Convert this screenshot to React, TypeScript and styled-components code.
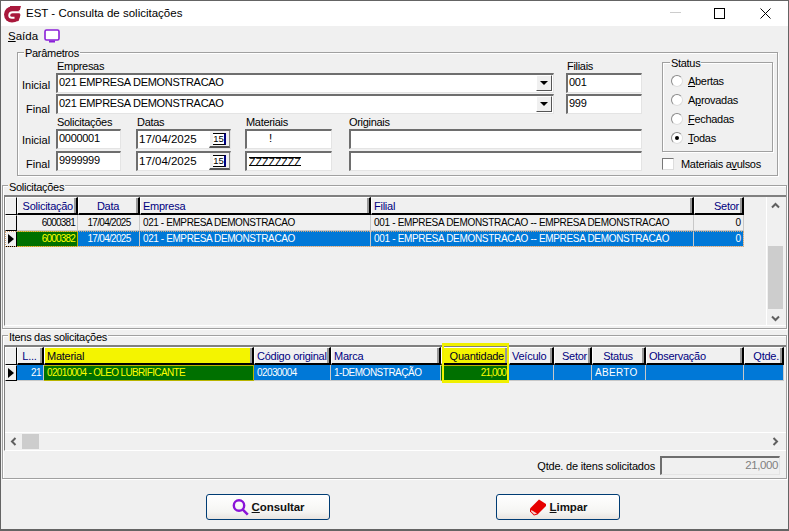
import React from 'react';
import styled, { createGlobalStyle, css } from 'styled-components';

const Global = createGlobalStyle`
  html, body { margin: 0; padding: 0; background: #f0f0f0; }
  body { font-family: "Liberation Sans", Arial, sans-serif; font-size: 11px; color: #000; }
  * { box-sizing: border-box; }
`;

const Win = styled.div`
  width: 789px; height: 531px; border: 1px solid #646464; border-bottom-width: 2px;
  background: #f0f0f0; display: flex; flex-direction: column; overflow: hidden;
`;
const TitleBar = styled.div`
  height: 25px; background: #fff; display: flex; align-items: center; padding-left: 3px; flex: none;
`;
const TitleText = styled.span`font-size: 11.5px; line-height: 14px; margin: 0 0 1px 5px; flex: 1; color: #000;`;
const WinBtn = styled.div<{ $pr?: number }>`
  width: 45px; height: 25px; display: flex; align-items: center; justify-content: center;
  padding: 0 ${p => p.$pr ?? 0}px 1px 0;
`;
const MenuBar = styled.div`
  height: 26px; flex: none; display: flex; align-items: flex-start; padding: 3px 7px 0; gap: 6px; font-size: 11.5px; line-height: 14px;
`;
const U = styled.span`text-decoration: underline;`;

const ParamBox = styled.div`
  position: relative; margin: 0 10px 0 16px; height: 124px; flex: none;
  border: 1px solid #a0a0a0; box-shadow: inset 1px 1px 0 #fff, 1px 1px 0 #fff;
  display: flex; padding: 6px 3px 0 3px;
`;
const Legend = styled.span<{ $left?: number }>`
  position: absolute; top: -6px; left: ${p => p.$left ?? 6}px; background: #f0f0f0; padding: 0 1px;
  font-size: 11px; line-height: 12px; white-space: nowrap; letter-spacing: -0.3px;
`;
const GroupLegend = styled(Legend)`top: -5px;`;
const FormCol = styled.div`width: 622px; flex: none; display: flex; flex-direction: column;`;
const TopGrid = styled.div`
  display: grid; grid-template-columns: 35px 498px 12px 76px; grid-template-rows: 14px 21px 20px;
`;
const BottomGrid = styled.div`
  display: grid; grid-template-columns: 35px 65px 15px 95px 14px 87px 17px 293px; grid-template-rows: 15px 22px 20px;
`;
const RowLabel = styled.label<{ $pad?: number; $dy: number }>`
  align-self: start; padding-left: ${p => p.$pad ?? 1}px; margin-top: ${p => p.$dy}px; font-size: 11px; line-height: 14px; color: #000;
`;
const ColLabel = styled.label<{ $col: number; $pt?: number; $px?: number }>`
  grid-column: ${p => p.$col}; font-size: 11px; line-height: 13px; padding: ${p => p.$pt ?? 1}px 0 0 ${p => p.$px ?? 1}px; white-space: nowrap; letter-spacing: -0.3px;
`;
const sunken = css`
  background: #fff;
  border-top: 2px solid #6e6e6e; border-left: 2px solid #6e6e6e;
  border-right: 1px solid #e4e4e4; border-bottom: 1px solid #e4e4e4;
`;
const Field = styled.div<{ $col?: number; $date?: boolean }>`
  ${sunken};
  ${p => p.$col ? `grid-column: ${p.$col};` : ''}
  height: 20px; align-self: start;
  font-size: ${p => p.$date ? '11.5px' : '11px'}; letter-spacing: ${p => p.$date ? '0' : '-0.3px'};
  line-height: 15px; padding: ${p => p.$date ? '0 0 1px 1px' : '0 0 3px 1px'}; white-space: nowrap; position: relative;
  display: flex; align-items: center; overflow: hidden;
`;
const ComboBtn = styled.div`
  position: absolute; right: 1px; top: 0; bottom: 1px; width: 16px; background: #f0f0f0;
  border-top: 1px solid #fff; border-left: 1px solid #fff; border-right: 1px solid #555; border-bottom: 1px solid #555;
  display: flex; align-items: center; justify-content: center;
`;
const Tri = styled.i`
  width: 0; height: 0; border-left: 4px solid transparent; border-right: 4px solid transparent; border-top: 4px solid #000; display: block;
`;
const DateBtn = styled.div`
  position: absolute; right: 0; top: 0; bottom: 0; width: 21px; background: #f0f0f0;
  border-left: 1px solid #fff; border-bottom: 2px solid #555; border-right: 1px solid #888;
  display: flex; align-items: center; justify-content: center;
`;
const DateIcon = styled.span`
  font-size: 9.5px; line-height: 10px; width: 13px; height: 12px; text-align: center; letter-spacing: 0;
  background: #fff; border-top: 1px solid #000; border-bottom: 1px solid #000; border-right: 2px solid #000080; color: #000;
`;
const Mark = styled.span`margin-left: 21px; font-size: 11.5px;`;
const Hatch = styled.span`
  display: inline-block; height: 9px; line-height: 8px; font-size: 10.6px; letter-spacing: 0; font-weight: 400;
  border-top: 1px solid #000; border-bottom: 1px solid #000; margin: 2px 0 0 1px;
`;

const SideCol = styled.div`margin-left: 19px; flex: 1; display: flex; flex-direction: column;`;
const StatusBox = styled.div`
  position: relative; height: 90px; margin-top: 3px; border: 1px solid #a0a0a0; box-shadow: inset 1px 1px 0 #fff, 1px 1px 0 #fff;
  display: flex; flex-direction: column; padding: 8px 0 0 8px; width: 111px;
`;
const RadioRow = styled.div`height: 19px; display: flex; align-items: center; gap: 5px; font-size: 11px; letter-spacing: -0.3px;`;
const Radio = styled.span<{ $on?: boolean }>`
  width: 12px; height: 12px; border-radius: 50%; background: #fff; border: 1px solid #8a8a8a; border-right-color: #ddd; border-bottom-color: #ddd;
  display: flex; align-items: center; justify-content: center;
  &::after { content: ''; width: 4px; height: 4px; border-radius: 50%; background: ${p => p.$on ? '#000' : 'transparent'}; }
`;
const CheckRow = styled.div`display: flex; align-items: center; gap: 7px; margin-top: 5px; height: 14px; font-size: 11px; letter-spacing: -0.3px;`;
const Check = styled.span`
  width: 12px; height: 12px; background: #fff; border: 1px solid #777; border-right-color: #ddd; border-bottom-color: #ddd;
`;

const Group = styled.div<{ $h: number; $mt: number }>`
  position: relative; flex: none; height: ${p => p.$h}px; margin: ${p => p.$mt}px 0 0 1px; width: 785px;
  border: 1px solid #a0a0a0; box-shadow: inset 1px 1px 0 #fff, 1px 1px 0 #fff; padding: 9px 0 0 1px;
`;
const Grid = styled.div<{ $h: number }>`
  height: ${p => p.$h}px; border-left: 1px solid #808080; border-top: 2px solid #808080; position: relative;
  display: flex; flex-direction: column; border-bottom: 1px solid #fff;
`;
const Row = styled.div<{ $selected?: boolean }>`
  display: flex; height: 16px; flex: none; align-self: flex-start;
  ${p => p.$selected && css`
    outline: 1px dotted #d8a878; outline-offset: -1px;
  `}
`;
const HeadRow = styled.div`display: flex; height: 18px; flex: none;`;
const Head = styled.div<{ $w: number; $align?: string; $hl?: boolean }>`
  width: ${p => p.$w}px; flex: none; height: 18px; padding: 0 3px 0 2px; color: ${p => p.$hl ? '#000020' : '#000080'};
  background: ${p => p.$hl ? '#f4f400' : '#f0f0f0'}; font-size: 11px; letter-spacing: -0.25px; line-height: 16px; text-align: ${p => p.$align ?? 'left'};
  border-top: 1px solid #fff; border-left: 1px solid #fff; border-right: 2px solid #000; border-bottom: 2px solid #000;
  box-shadow: inset -2px 0 0 #999; white-space: nowrap; overflow: hidden;
`;
const Cell = styled.div<{ $w: number; $align?: string; $bg?: string; $fg?: string; $ls?: number; $frame?: boolean }>`
  width: ${p => p.$w}px; flex: none; height: 16px; padding: 0 2px 0 3px; font-size: 10px; line-height: 15px;
  letter-spacing: ${p => p.$ls ?? 0}px;
  text-align: ${p => p.$align ?? 'left'}; background: ${p => p.$bg ?? 'transparent'}; color: ${p => p.$fg ?? '#000'};
  border-right: 1px solid #c8c8c8; border-bottom: 1px solid #c8c8c8; white-space: nowrap; overflow: hidden;
  ${p => p.$frame && 'border-color: #b8b400; box-shadow: inset 0 1px 0 #b8b400;'}
`;
const Indicator = styled.div`
  width: 12px; flex: none; height: 16px; background: #f0f0f0; border-top: 1px solid #fff; border-left: 1px solid #fff;
  border-right: 1px solid #000; border-bottom: 1px solid #000; display: flex; align-items: center; justify-content: center;
`;
const HeadIndicator = styled(Indicator)`height: 18px;`;
const Arrow = styled.i`
  width: 0; height: 0; border-top: 5px solid transparent; border-bottom: 5px solid transparent; border-left: 6px solid #000; display: block;
`;
const QtyFrame = styled.div`
  position: absolute; left: 437px; top: -4px; width: 67px; height: 40px; pointer-events: none;
  border-style: solid; border-color: #f0f000; border-width: 3px 2px 3px 2px;
`;
const VBar = styled.div`
  position: absolute; right: 2px; top: 0; bottom: 0; width: 18px; display: flex; flex-direction: column; align-items: stretch; background: #f0f0f0;
  border-left: 1px solid #fff;
`;
const BarBtn = styled.div`height: 17px; flex: none; display: flex; align-items: center; justify-content: center;`;
const VSpacer = styled.div<{ $h: number }>`height: ${p => p.$h}px; flex: none;`;
const VThumb = styled.div`height: 63px; flex: none; background: #cdcdcd; margin: 0 1px;`;
const HBar = styled.div`
  position: absolute; left: 0; right: 0; bottom: 0; height: 18px; display: flex; align-items: center; background: #f0f0f0;
  border-top: 1px solid #fff; padding-right: 2px;
`;
const HBtn = styled.div`width: 17px; flex: none; display: flex; align-items: center; justify-content: center;`;
const HThumb = styled.div`width: 17px; height: 15px; background: #cdcdcd; flex: none;`;
const HFill = styled.div`flex: 1;`;
const Summary = styled.div`
  display: flex; justify-content: flex-end; align-items: center; gap: 5px; margin-top: 5px; padding-right: 6px; height: 19px; font-size: 11px; letter-spacing: -0.2px;
`;
const SummaryBox = styled.div`
  width: 120px; height: 19px; border-top: 2px solid #6e6e6e; border-left: 2px solid #6e6e6e; border-right: 1px solid #e4e4e4; border-bottom: 1px solid #e4e4e4;
  text-align: right; color: #808080; font-size: 11.5px; letter-spacing: -0.4px; line-height: 15px; padding-right: 1px;
`;
const Footer = styled.div`display: flex; height: 26px; margin-top: 15px; padding-left: 205px; gap: 166px; flex: none;`;
const Btn = styled.div`
  width: 124px; height: 26px; border: 1px solid #003c74; border-radius: 3px;
  background: linear-gradient(#fff, #f5f5f3 70%, #e8e4e0);
  display: flex; align-items: center; justify-content: center; gap: 3px; font-size: 11.5px; letter-spacing: -0.1px; font-weight: 700; color: #111;
`;

const sol = [
  { w: 61, t: 'Solicitação', a: 'right', va: 'right', ls: -0.8 },
  { w: 62, t: 'Data', a: 'center', va: 'center', ls: -0.7 },
  { w: 231, t: 'Empresa', ls: -0.4 },
  { w: 323, t: 'Filial', ls: -0.32 },
  { w: 50, t: 'Setor', a: 'right', va: 'right', ls: 0 },
];
const solRows = [
  ['6000381', '17/04/2025', '021 - EMPRESA DEMONSTRACAO', '001 - EMPRESA DEMONSTRACAO -- EMPRESA DEMONSTRACAO', '0'],
  ['6000382', '17/04/2025', '021 - EMPRESA DEMONSTRACAO', '001 - EMPRESA DEMONSTRACAO -- EMPRESA DEMONSTRACAO', '0'],
];
const items: { w: number; t: string; a?: string; v: string; va?: string; hl?: boolean; green?: boolean; ls?: number }[] = [
  { w: 27, t: 'L...', a: 'center', v: '21', va: 'right', ls: -0.5 },
  { w: 210, t: 'Material', hl: true, v: '02010004 - OLEO LUBRIFICANTE', green: true, ls: -0.65 },
  { w: 77, t: 'Código original', v: '02030004', ls: -0.6 },
  { w: 110, t: 'Marca', v: '1-DEMONSTRAÇÃO', ls: -0.5 },
  { w: 68, t: 'Quantidade', a: 'right', hl: true, v: '21,000', va: 'right', green: true, ls: -0.9 },
  { w: 45, t: 'Veículo', v: '' },
  { w: 38, t: 'Setor', a: 'right', v: '' },
  { w: 54, t: 'Status', a: 'center', v: 'ABERTO', ls: 0.3 },
  { w: 98, t: 'Observação', v: '' },
  { w: 40, t: 'Qtde.', a: 'right', v: '' },
];
const BLUE = '#0078d7';
const GREEN = '#007000';

const Chevron = ({ d }: { d: string }) => (
  <svg width="9" height="7" viewBox="0 0 9 7" fill="none"><path d={d} stroke="#606060" strokeWidth="2" /></svg>
);
const ChevronH = ({ d }: { d: string }) => (
  <svg width="7" height="9" viewBox="0 0 7 9" fill="none"><path d={d} stroke="#606060" strokeWidth="2" /></svg>
);

export default function App() {
  return (
    <Win>
      <Global />
      <TitleBar>
        <svg width="17" height="18" viewBox="0 0 17 18">
          <circle cx="8" cy="9.5" r="8" fill="#a9183c" />
          <path d="M6 1 L17 1 L15.8 5.2 L6 5.2 Z" fill="#a9183c" />
          <path d="M9 9.6 L16.6 9.6 L14.6 16 L9 17 Z" fill="#a9183c" />
          <path d="M17 7.2 H8.6 Q5.4 7.2 5.2 10.2 Q5.2 12.8 8 12.8 H10.5" stroke="#fff" strokeWidth="1.9" fill="none" />
        </svg>
        <TitleText>EST - Consulta de solicitações</TitleText>
        <WinBtn><svg width="11" height="2"><rect width="11" height="1" fill="#ccc" /></svg></WinBtn>
        <WinBtn $pr={2}><svg width="11" height="11"><rect x="0.5" y="0.5" width="10" height="10" fill="none" stroke="#000" /></svg></WinBtn>
        <WinBtn><svg width="11" height="11"><path d="M0.5 0.5 L10.5 10.5 M10.5 0.5 L0.5 10.5" stroke="#000" /></svg></WinBtn>
      </TitleBar>
      <MenuBar>
        <span><U>S</U>aída</span>
        <svg width="16" height="14" viewBox="0 0 16 14">
          <rect x="1" y="1" width="14" height="10" rx="1.5" fill="#fff" stroke="#8a1fd8" strokeWidth="1.6" />
          <rect x="5" y="11.5" width="6" height="2" fill="#8a1fd8" />
        </svg>
      </MenuBar>
      <ParamBox>
        <Legend>Parâmetros</Legend>
        <FormCol>
          <TopGrid>
            <ColLabel $col={2}>Empresas</ColLabel>
            <ColLabel $col={4}>Filiais</ColLabel>
            <RowLabel $dy={5}>Inicial</RowLabel>
            <Field $col={2}>021 EMPRESA DEMONSTRACAO<ComboBtn><Tri /></ComboBtn></Field>
            <Field $col={4}>001</Field>
            <RowLabel $pad={5} $dy={8}>Final</RowLabel>
            <Field $col={2}>021 EMPRESA DEMONSTRACAO<ComboBtn><Tri /></ComboBtn></Field>
            <Field $col={4}>999</Field>
          </TopGrid>
          <BottomGrid>
            <ColLabel $col={2} $pt={2}>Solicitações</ColLabel>
            <ColLabel $col={4} $pt={2}>Datas</ColLabel>
            <ColLabel $col={6} $pt={2}>Materiais</ColLabel>
            <ColLabel $col={8} $pt={2} $px={0}>Originais</ColLabel>
            <RowLabel $dy={4}>Inicial</RowLabel>
            <Field $col={2}>0000001</Field>
            <Field $col={4} $date>17/04/2025<DateBtn><DateIcon>15</DateIcon></DateBtn></Field>
            <Field $col={6}><Mark>!</Mark></Field>
            <Field $col={8} />
            <RowLabel $pad={5} $dy={6}>Final</RowLabel>
            <Field $col={2}>9999999</Field>
            <Field $col={4} $date>17/04/2025<DateBtn><DateIcon>15</DateIcon></DateBtn></Field>
            <Field $col={6}><Hatch>ZZZZZZZZ</Hatch></Field>
            <Field $col={8} />
          </BottomGrid>
        </FormCol>
        <SideCol>
          <StatusBox>
            <Legend $left={7}>Status</Legend>
            <RadioRow><Radio /><span><U>A</U>bertas</span></RadioRow>
            <RadioRow><Radio /><span>A<U>p</U>rovadas</span></RadioRow>
            <RadioRow><Radio /><span><U>F</U>echadas</span></RadioRow>
            <RadioRow><Radio $on /><span><U>T</U>odas</span></RadioRow>
          </StatusBox>
          <CheckRow><Check /><span>Materiais a<U>v</U>ulsos</span></CheckRow>
        </SideCol>
      </ParamBox>

      <Group $h={144} $mt={9}>
        <GroupLegend $left={5}>Solicitações</GroupLegend>
        <Grid $h={131}>
          <HeadRow>
            <HeadIndicator />
            {sol.map(c => <Head key={c.t} $w={c.w} $align={c.a}>{c.t}</Head>)}
          </HeadRow>
          {solRows.map((r, i) => (
            <Row key={r[0]} $selected={i === 1}>
              <Indicator>{i === 1 && <Arrow />}</Indicator>
              {r.map((v, j) => (
                <Cell key={j} $w={sol[j].w} $align={sol[j].va} $ls={sol[j].ls}
                  $bg={i === 1 ? (j === 0 ? GREEN : BLUE) : undefined}
                  $fg={i === 1 ? (j === 0 ? '#ffff00' : '#fff') : '#000'}
                  $frame={i === 1 && j === 0}>{v}</Cell>
              ))}
            </Row>
          ))}
          <VBar>
            <BarBtn><Chevron d="M1 5.5 L4.5 2 L8 5.5" /></BarBtn>
            <VSpacer $h={32} />
            <VThumb />
            <VSpacer $h={1} />
            <BarBtn><Chevron d="M1 1.5 L4.5 5 L8 1.5" /></BarBtn>
          </VBar>
        </Grid>
      </Group>

      <Group $h={144} $mt={6}>
        <GroupLegend $left={5}>Itens das solicitações</GroupLegend>
        <Grid $h={106}>
          <HeadRow>
            <HeadIndicator />
            {items.map(c => <Head key={c.t} $w={c.w} $align={c.a} $hl={c.hl}>{c.t}</Head>)}
          </HeadRow>
          <Row>
            <Indicator><Arrow /></Indicator>
            {items.map(c => (
              <Cell key={c.t} $w={c.w} $align={c.va} $ls={c.ls} $frame={c.green}
                $bg={c.green ? GREEN : BLUE} $fg={c.green ? '#ffff00' : '#fff'}>{c.v}</Cell>
            ))}
          </Row>
          <QtyFrame />
          <HBar>
            <HBtn><ChevronH d="M5.5 1 L2 4.5 L5.5 8" /></HBtn>
            <HThumb />
            <HFill />
            <HBtn><ChevronH d="M1.5 1 L5 4.5 L1.5 8" /></HBtn>
          </HBar>
        </Grid>
        <Summary>
          <span>Qtde. de itens solicitados</span>
          <SummaryBox>21,000</SummaryBox>
        </Summary>
      </Group>

      <Footer>
        <Btn>
          <svg width="17" height="17" viewBox="0 0 17 17" fill="none">
            <circle cx="7" cy="6.5" r="5.2" stroke="#8a14d8" strokeWidth="2.4" />
            <path d="M10.8 10.6 L15.8 15.6" stroke="#8a14d8" strokeWidth="2.6" />
          </svg>
          <span><U>C</U>onsultar</span>
        </Btn>
        <Btn>
          <svg width="18" height="17" viewBox="0 0 18 17">
            <path d="M10 0.5 L17 5 L17 7 L8.5 15.5 L5 16.5 L1 12.5 L1 9.5 Z" fill="#e60000" />
            <path d="M2.2 11 L8 14.6 L5.2 15.4 L2.2 12.4 Z" fill="#f6d8d8" />
          </svg>
          <span><U>L</U>impar</span>
        </Btn>
      </Footer>
    </Win>
  );
}
